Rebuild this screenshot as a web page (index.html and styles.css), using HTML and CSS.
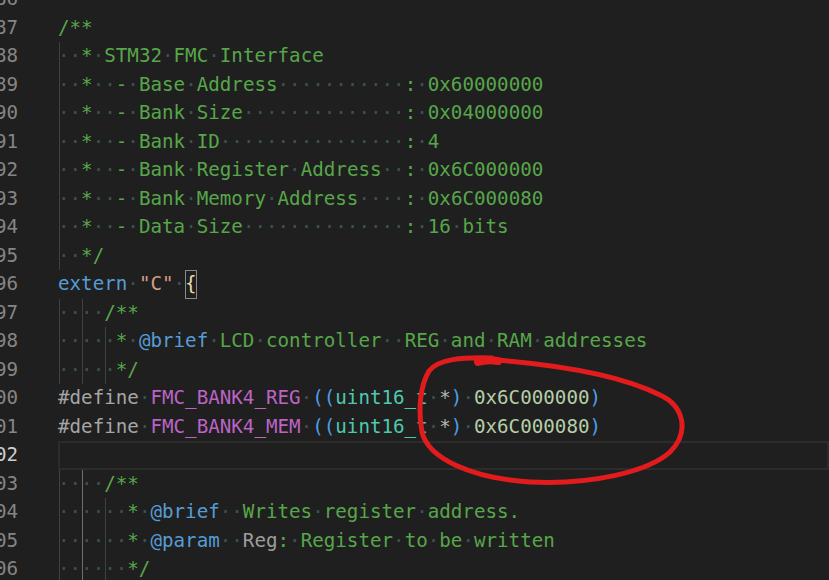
FILE: index.html
```html
<!DOCTYPE html>
<html>
<head>
<meta charset="utf-8">
<link rel="stylesheet" href="styles.css">
</head>
<body>
<div class="editor">
  <div class="line"><span class="gutter"><span>86</span></span><span class="code"></span></div>
  <div class="line"><span class="gutter"><span>87</span></span><span class="code"><span class="cm">/**</span></span></div>
  <div class="line"><span class="gutter"><span>88</span></span><span class="code g1"><span class="cm"><span class="w">··</span>*<span class="w">·</span>STM32<span class="w">·</span>FMC<span class="w">·</span>Interface</span></span></div>
  <div class="line"><span class="gutter"><span>89</span></span><span class="code g1"><span class="cm"><span class="w">··</span>*<span class="w">··</span>-<span class="w">·</span>Base<span class="w">·</span>Address<span class="w">···········</span>:<span class="w">·</span>0x60000000</span></span></div>
  <div class="line"><span class="gutter"><span>90</span></span><span class="code g1"><span class="cm"><span class="w">··</span>*<span class="w">··</span>-<span class="w">·</span>Bank<span class="w">·</span>Size<span class="w">··············</span>:<span class="w">·</span>0x04000000</span></span></div>
  <div class="line"><span class="gutter"><span>91</span></span><span class="code g1"><span class="cm"><span class="w">··</span>*<span class="w">··</span>-<span class="w">·</span>Bank<span class="w">·</span>ID<span class="w">················</span>:<span class="w">·</span>4</span></span></div>
  <div class="line"><span class="gutter"><span>92</span></span><span class="code g1"><span class="cm"><span class="w">··</span>*<span class="w">··</span>-<span class="w">·</span>Bank<span class="w">·</span>Register<span class="w">·</span>Address<span class="w">··</span>:<span class="w">·</span>0x6C000000</span></span></div>
  <div class="line"><span class="gutter"><span>93</span></span><span class="code g1"><span class="cm"><span class="w">··</span>*<span class="w">··</span>-<span class="w">·</span>Bank<span class="w">·</span>Memory<span class="w">·</span>Address<span class="w">····</span>:<span class="w">·</span>0x6C000080</span></span></div>
  <div class="line"><span class="gutter"><span>94</span></span><span class="code g1"><span class="cm"><span class="w">··</span>*<span class="w">··</span>-<span class="w">·</span>Data<span class="w">·</span>Size<span class="w">··············</span>:<span class="w">·</span>16<span class="w">·</span>bits</span></span></div>
  <div class="line"><span class="gutter"><span>95</span></span><span class="code g1"><span class="cm"><span class="w">··</span>*/</span></span></div>
  <div class="line"><span class="gutter"><span>96</span></span><span class="code"><span class="kw">extern</span><span class="w">·</span><span class="str">"C"</span><span class="w">·</span><span class="bm">{</span></span></div>
  <div class="line"><span class="gutter"><span>97</span></span><span class="code g2"><span class="cm"><span class="w">····</span>/**</span></span></div>
  <div class="line"><span class="gutter"><span>98</span></span><span class="code g3"><span class="cm"><span class="w">·····</span>*<span class="w">·</span><span class="tag">@brief</span><span class="w">·</span>LCD<span class="w">·</span>controller<span class="w">··</span>REG<span class="w">·</span>and<span class="w">·</span>RAM<span class="w">·</span>addresses</span></span></div>
  <div class="line"><span class="gutter"><span>99</span></span><span class="code g3"><span class="cm"><span class="w">·····</span>*/</span></span></div>
  <div class="line"><span class="gutter"><span>100</span></span><span class="code"><span class="pp">#define</span><span class="w">·</span><span class="mac">FMC_BANK4_REG</span><span class="w">·</span><span class="br">((</span><span class="ty">uint16_t</span><span class="w">·</span><span class="op">*</span><span class="br">)</span><span class="w">·</span><span class="num">0x6C000000</span><span class="br">)</span></span></div>
  <div class="line"><span class="gutter"><span>101</span></span><span class="code"><span class="pp">#define</span><span class="w">·</span><span class="mac">FMC_BANK4_MEM</span><span class="w">·</span><span class="br">((</span><span class="ty">uint16_t</span><span class="w">·</span><span class="op">*</span><span class="br">)</span><span class="w">·</span><span class="num">0x6C000080</span><span class="br">)</span></span></div>
  <div class="line active"><span class="gutter"><span>102</span></span><span class="code current"></span></div>
  <div class="line"><span class="gutter"><span>103</span></span><span class="code g2a"><span class="cm"><span class="w">····</span>/**</span></span></div>
  <div class="line"><span class="gutter"><span>104</span></span><span class="code g3a"><span class="cm"><span class="w">······</span>*<span class="w">·</span><span class="tag">@brief</span><span class="w">··</span>Writes<span class="w">·</span>register<span class="w">·</span>address.</span></span></div>
  <div class="line"><span class="gutter"><span>105</span></span><span class="code g3a"><span class="cm"><span class="w">······</span>*<span class="w">·</span><span class="tag">@param</span><span class="w">··</span><span class="prm">Reg</span>:<span class="w">·</span>Register<span class="w">·</span>to<span class="w">·</span>be<span class="w">·</span>written</span></span></div>
  <div class="line"><span class="gutter"><span>106</span></span><span class="code g3a"><span class="cm"><span class="w">······</span>*/</span></span></div>
</div>
<svg class="scribble" viewBox="0 0 829 580" xmlns="http://www.w3.org/2000/svg">
  <path d="M 492 358 C 462 357 438 359 429 371 C 420 386 418 410 422 432 C 428 458 470 478 530 482 C 590 485 648 472 670 452 C 690 432 684 406 660 395 C 626 378 570 366 496 360" fill="none" stroke="#e21b1d" stroke-width="5" stroke-linecap="round" stroke-linejoin="round"/>
  <path d="M 478 362 C 485 360 492 360 498 361" fill="none" stroke="#e21b1d" stroke-width="8" stroke-linecap="round"/>
</svg>
</body>
</html>
```

FILE: styles.css
```css
html, body {
  margin: 0;
  padding: 0;
  background: #1f1f1f;
  overflow: hidden;
}

body {
  width: 829px;
  height: 580px;
  position: relative;
  font-family: "DejaVu Sans Mono", "Liberation Mono", monospace;
  font-size: 19.2px;
}

.editor {
  margin-top: -14.75px;
}

.line {
  display: flex;
  height: 28.5px;
  line-height: 28.5px;
}

.gutter {
  flex: none;
  width: 58px;
  padding-right: 40px;
  box-sizing: border-box;
  display: flex;
  justify-content: flex-end;
  color: #858585;
  white-space: pre;
}

.active .gutter {
  color: #cfcfcf;
}

.code {
  flex: 1;
  white-space: pre;
  color: #d4d4d4;
  background-repeat: no-repeat;
}

.g1 {
  background-image: linear-gradient(#404040, #404040);
  background-size: 1px 100%;
  background-position: 1px 0;
}

.g2 {
  background-image: linear-gradient(#404040, #404040), linear-gradient(#404040, #404040);
  background-size: 1px 100%, 1px 100%;
  background-position: 1px 0, 24px 0;
}

.g3 {
  background-image: linear-gradient(#404040, #404040), linear-gradient(#404040, #404040), linear-gradient(#404040, #404040);
  background-size: 1px 100%, 1px 100%, 1px 100%;
  background-position: 1px 0, 24px 0, 47px 0;
}

.g2a {
  background-image: linear-gradient(#404040, #404040), linear-gradient(#6e6e6e, #6e6e6e);
  background-size: 1px 100%, 1px 100%;
  background-position: 1px 0, 24px 0;
}

.g3a {
  background-image: linear-gradient(#404040, #404040), linear-gradient(#6e6e6e, #6e6e6e), linear-gradient(#404040, #404040);
  background-size: 1px 100%, 1px 100%, 1px 100%;
  background-position: 1px 0, 24px 0, 47px 0;
}

.current {
  box-shadow: inset 0 0 0 2px #2c2c2c;
}

.w { color: #3b5252; }
.cm { color: #57a64a; }
.tag { color: #569cd6; }
.prm { color: #9d9d9d; }
.kw { color: #569cd6; }
.str { color: #d69d85; }
.pp { color: #a5a5a5; }
.mac { color: #bd63c5; }
.br { color: #4c9ee6; }
.ty { color: #4ec9b0; }
.op { color: #b4b4b4; }
.num { color: #b5cea8; }

.bm {
  display: inline-block;
  height: 28.5px;
  vertical-align: top;
  color: #e6dcb0;
  box-shadow: inset 0 0 0 1px #8a8a8a;
}

.scribble {
  position: absolute;
  left: 0;
  top: 0;
  width: 829px;
  height: 580px;
  pointer-events: none;
}
```
